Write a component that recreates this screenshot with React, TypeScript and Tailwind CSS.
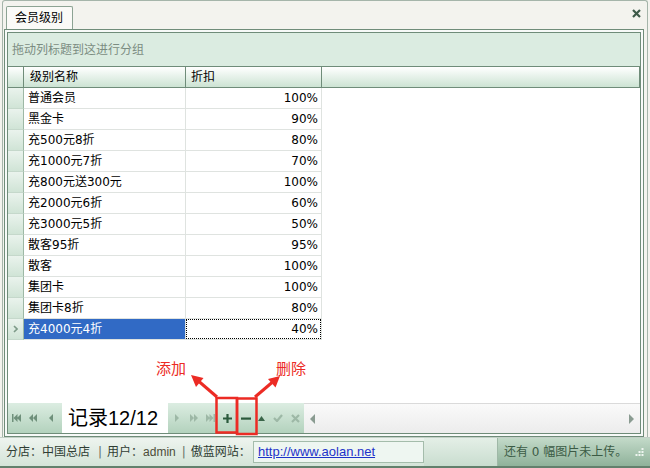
import React from 'react';

const rows: [string, string][] = [
  ['普通会员', '100%'],
  ['黑金卡', '90%'],
  ['充500元8折', '80%'],
  ['充1000元7折', '70%'],
  ['充800元送300元', '100%'],
  ['充2000元6折', '60%'],
  ['充3000元5折', '50%'],
  ['散客95折', '95%'],
  ['散客', '100%'],
  ['集团卡', '100%'],
  ['集团卡8折', '80%'],
  ['充4000元4折', '40%'],
];

const NavBtn = ({ w, children }: { w: string; children: React.ReactNode }) => (
  <div className={`${w} h-full flex items-center justify-center`}>{children}</div>
);

const Tri = ({ dir, color }: { dir: 'l' | 'r'; color: string }) => (
  <svg width="4" height="8" viewBox="0 0 4 8">
    <path d={dir === 'l' ? 'M4 0 L0 4 L4 8Z' : 'M0 0 L4 4 L0 8Z'} fill={color} />
  </svg>
);

function Navigator() {
  const dim = '#6f907b';
  const light = '#9db8a6';
  return (
    <div className="h-[30px] flex">
      <div className="flex h-full bg-linear-to-b from-[#dcede2] to-[#b3d2bd]">
        <NavBtn w="w-[16px]">
          <svg width="9" height="8" viewBox="0 0 9 8">
            <rect x="0" y="0" width="1.5" height="8" fill={dim} />
            <path d="M5.5 0 L1.5 4 L5.5 8Z M9 0 L5 4 L9 8Z" fill={dim} />
          </svg>
        </NavBtn>
        <NavBtn w="w-[18px]">
          <svg width="8" height="8" viewBox="0 0 8 8">
            <path d="M4 0 L0 4 L4 8Z M8 0 L4 4 L8 8Z" fill={dim} />
          </svg>
        </NavBtn>
        <NavBtn w="w-[18px]">
          <Tri dir="l" color={dim} />
        </NavBtn>
        <div className="w-[2px]" />
        <div className="w-[106px] h-full bg-white flex items-center pl-[6px] text-[20px] leading-none text-black font-['Liberation_Sans','Noto_Sans_CJK_SC',sans-serif]">
          记录12/12
        </div>
        <NavBtn w="w-[18px]">
          <Tri dir="r" color={light} />
        </NavBtn>
        <NavBtn w="w-[16px]">
          <svg width="8" height="8" viewBox="0 0 8 8">
            <path d="M0 0 L4 4 L0 8Z M4 0 L8 4 L4 8Z" fill={light} />
          </svg>
        </NavBtn>
        <NavBtn w="w-[16px]">
          <svg width="9" height="8" viewBox="0 0 9 8">
            <path d="M0 0 L4 4 L0 8Z M3.5 0 L7.5 4 L3.5 8Z" fill={light} />
            <rect x="7.5" y="0" width="1.5" height="8" fill={light} />
          </svg>
        </NavBtn>
        <NavBtn w="w-[18px]">
          <svg width="9" height="9" viewBox="0 0 9 9">
            <path d="M4.5 0 V9 M0 4.5 H9" stroke="#2b5a3c" strokeWidth="2.2" />
          </svg>
        </NavBtn>
        <NavBtn w="w-[19px]">
          <svg width="10" height="3" viewBox="0 0 10 3">
            <rect x="0" y="0.5" width="10" height="2.2" fill="#2b5a3c" />
          </svg>
        </NavBtn>
        <NavBtn w="w-[13px]">
          <svg width="7" height="5" viewBox="0 0 7 5">
            <path d="M0 5 L3.5 0 L7 5Z" fill="#3a6549" />
          </svg>
        </NavBtn>
        <NavBtn w="w-[19px]">
          <svg width="10" height="8" viewBox="0 0 10 8">
            <path d="M1 4 L4 7 L9 1" stroke={light} strokeWidth="2.2" fill="none" />
          </svg>
        </NavBtn>
        <NavBtn w="w-[17px]">
          <svg width="9" height="9" viewBox="0 0 9 9">
            <path d="M1 1 L8 8 M8 1 L1 8" stroke={light} strokeWidth="2.2" />
          </svg>
        </NavBtn>
      </div>
      <div className="flex-1 h-full border-t border-[#dadada] bg-linear-to-b from-[#fafafa] to-[#ececec] flex items-center justify-between px-[6px]">
        <svg width="5" height="10" viewBox="0 0 5 10">
          <path d="M5 0 L0 5 L5 10Z" fill="#8a9b91" />
        </svg>
        <svg width="5" height="10" viewBox="0 0 5 10">
          <path d="M0 0 L5 5 L0 10Z" fill="#8a9b91" />
        </svg>
      </div>
    </div>
  );
}

function Grid() {
  return (
    <div className="flex-1 flex flex-col bg-white">
      <div className="h-[22px] flex border-y border-[#6f8c79] bg-linear-to-b from-white to-[#cce3d3] text-[12px] text-black">
        <div className="w-[16px] border-r border-[#6f8c79]" />
        <div className="w-[162px] border-r border-[#6f8c79] pl-[6px] flex items-center">级别名称</div>
        <div className="w-[136px] border-r border-[#6f8c79] pl-[5px] flex items-center">折扣</div>
        <div className="flex-1 border-r border-[#6f8c79]" />
      </div>
      {rows.map(([name, pct], i) => {
        const sel = i === rows.length - 1;
        return (
          <div key={name} className="h-[21px] flex">
            <div className="w-[16px] border-r border-b border-r-[#9db8a5] border-b-[#c5d8cb] bg-linear-to-b from-[#eaf3ed] to-[#d0e4d6] flex items-center justify-center">
              {sel && (
                <svg width="5" height="8" viewBox="0 0 5 8">
                  <path d="M1 1 L4 4 L1 7" stroke="#7d9a88" strokeWidth="1.6" fill="none" />
                </svg>
              )}
            </div>
            <div
              className={`w-[162px] border-r border-b border-[#dfe3e0] pl-[4px] flex items-center ${
                sel ? 'bg-[#316ac5] text-white' : 'text-black'
              }`}
            >
              {name}
            </div>
            <div className="w-[136px] border-r border-b border-[#dfe3e0] flex">
              <div
                className={`flex-1 flex items-center justify-end pr-[2px] text-black ${
                  sel ? 'border border-dotted border-black' : 'border border-transparent'
                }`}
              >
                {pct}
              </div>
            </div>
            <div className="flex-1" />
          </div>
        );
      })}
      <div className="flex-1" />
      <Navigator />
    </div>
  );
}

export default function App() {
  return (
    <div className="relative w-[650px] h-[468px] overflow-hidden bg-[#f3f3ee] flex flex-col text-[12px] font-['DejaVu_Sans','Noto_Sans_CJK_SC',sans-serif]">
      <div className="h-[437px] mx-[2px] flex flex-col border-x border-t border-[#a5b5aa] rounded-t-[3px]">
        <div className="h-[28px] flex items-end justify-between pl-[3px] pr-[6px]">
          <div className="h-[23px] w-[67px] border border-b-0 border-[#8ca393] rounded-t-[2px] bg-[#fafaf7] flex items-center pl-[8px] text-black">
            会员级别
          </div>
          <div className="h-full flex items-center pb-[4px]">
            <svg width="9" height="9" viewBox="0 0 9 9">
              <path d="M1 1 L8 8 M8 1 L1 8" stroke="#3d5a48" strokeWidth="2.2" />
            </svg>
          </div>
        </div>
        <div className="ml-[1px] w-[640px] h-[408px] border border-[#6f8c79] p-[2px] bg-[#f7faf8]">
          <div className="h-full border border-[#6f8c79] flex flex-col">
            <div className="h-[33px] bg-[#dbece1] flex items-center pl-[4px] text-[#7b8c81]">
              拖动列标题到这进行分组
            </div>
            <Grid />
          </div>
        </div>
      </div>
      <div className="flex-1 flex border-t border-[#c2d0c6] border-b-2 border-b-[#62806c] bg-linear-to-b from-[#eef4ef] to-[#d4e4d8] text-[#2f3d34] whitespace-nowrap">
        <div className="flex items-center pl-[6px] w-[253px] shrink-0">
          <span>分店：中国总店</span>
          <span className="ml-[8px] mr-[5px] text-[#5f6f64]">|</span>
          <span>用户：</span>
          <span className="text-[12px] text-[#4c4c38] font-['Liberation_Sans',sans-serif]">admin</span>
          <span className="ml-[6px] mr-[5px] text-[#5f6f64]">|</span>
          <span>傲蓝网站：</span>
        </div>
        <div className="my-[3px] w-[171px] shrink-0 border border-[#a4bcab] bg-[#eef6f1] flex items-center pl-[4px]">
          <span className="text-[13px] text-[#1d33c9] underline font-['Liberation_Sans',sans-serif]">http://www.aolan.net</span>
        </div>
        <div className="w-[74px] shrink-0 border-r border-[#9fb8a7] bg-linear-to-b from-[#e4efe7] to-[#c9ddcf]" />
        <div className="flex-1 flex items-center justify-between pl-[6px] pr-[6px] bg-linear-to-b from-[#c3dac9] to-[#8fb29a] text-[#3b5b45]">
          <span>还有 0 幅图片未上传。</span>
          <svg width="10" height="10" viewBox="0 0 10 10">
            <g fill="#eef5f0">
              <rect x="7.5" y="1" width="2" height="2" />
              <rect x="4.5" y="4" width="2" height="2" />
              <rect x="7.5" y="4" width="2" height="2" />
              <rect x="1.5" y="7" width="2" height="2" />
              <rect x="4.5" y="7" width="2" height="2" />
              <rect x="7.5" y="7" width="2" height="2" />
            </g>
          </svg>
        </div>
      </div>

      <div className="absolute left-[156px] top-[360px] text-[15px] leading-none text-[#ec2b24] font-['Noto_Sans_CJK_SC',sans-serif]">
        添加
      </div>
      <div className="absolute left-[276px] top-[360px] text-[15px] leading-none text-[#ec2b24] font-['Noto_Sans_CJK_SC',sans-serif]">
        删除
      </div>
      <svg className="absolute left-0 top-0 pointer-events-none" width="650" height="468" viewBox="0 0 650 468">
        <g stroke="#ec2b24" fill="none" strokeWidth="2.5">
          <rect x="216.5" y="398" width="20.5" height="34.5" />
          <rect x="237" y="398.5" width="19.5" height="35.5" />
          <line x1="217" y1="397" x2="199" y2="381.5" strokeWidth="3" />
          <line x1="255" y1="397" x2="272" y2="382.5" strokeWidth="3" />
        </g>
        <g fill="#ec2b24">
          <path d="M191 375 L203.5 378 L196 387Z" />
          <path d="M280 376 L275.5 387.5 L268 379Z" />
        </g>
      </svg>
    </div>
  );
}
